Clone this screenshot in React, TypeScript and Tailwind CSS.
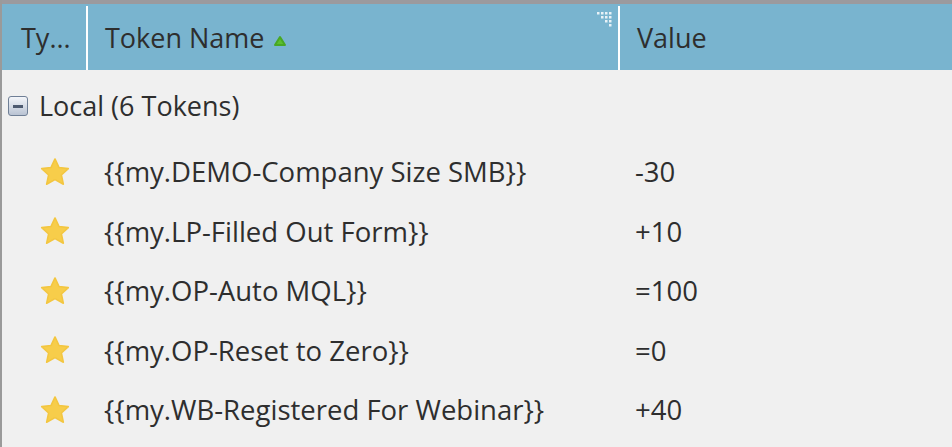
import React from 'react';

const tokens = [
  { name: '{{my.DEMO-Company Size SMB}}', value: '-30' },
  { name: '{{my.LP-Filled Out Form}}', value: '+10' },
  { name: '{{my.OP-Auto MQL}}', value: '=100' },
  { name: '{{my.OP-Reset to Zero}}', value: '=0' },
  { name: '{{my.WB-Registered For Webinar}}', value: '+40' },
];

const Star: React.FC = () => (
  <svg width="32" height="30" viewBox="0 0 24 23" className="shrink-0">
    <path
      d="M12 1.5l3.1 6.6 7.1.8-5.3 4.9 1.5 7.1L12 17.3l-6.4 3.6 1.5-7.1L1.8 8.9l7.1-.8z"
      fill="#f7cd4a"
      stroke="#f3c640"
      strokeWidth="1.2"
      strokeLinejoin="round"
    />
  </svg>
);

const SortUp: React.FC = () => (
  <svg width="14" height="12" viewBox="0 0 14 12" className="ml-[8px] mt-[6px]">
    <path d="M7 2 L12 10 L2 10 Z" fill="#5cbf2f" stroke="#48a824" strokeWidth="2" strokeLinejoin="round" />
  </svg>
);

const Grip: React.FC = () => (
  <svg width="18" height="18" viewBox="0 0 18 18" className="absolute right-[4px] top-[5px]">
    {[
      [1, 1], [5, 1], [9, 1], [13, 1],
      [5, 5], [9, 5], [13, 5],
      [9, 9], [13, 9],
      [13, 13],
    ].map(([x, y]) => (
      <rect key={`${x}-${y}`} x={x} y={y} width="2.5" height="2.5" fill="#e8f2f7" />
    ))}
  </svg>
);

const App: React.FC = () => {
  return (
    <div
      className="w-[952px] h-[447px] overflow-hidden bg-[#f0f0f0] border-l-2 border-[#9a9a9a] text-[#2e2e2e]"
      style={{ fontFamily: '"Open Sans", "Noto Sans", sans-serif' }}
    >
      <div className="h-[4px] bg-[#9b9a9e]" />
      <div className="flex h-[66px] bg-[#79b4cf] text-[27px] pt-[2px]">
        <div className="w-[86px] flex items-center pl-[19px] border-r-2 border-white">Ty...</div>
        <div className="relative w-[532px] flex items-center pl-[17px] border-r-2 border-white">
          <span>Token Name</span>
          <SortUp />
          <Grip />
        </div>
        <div className="flex-1 flex items-center pl-[17px]">Value</div>
      </div>

      <div className="flex items-center h-[72px] pl-[6px] text-[27px]">
        <div className="w-[20px] h-[20px] rounded-[3px] border border-[#6f7f96] bg-gradient-to-b from-[#f4f6fa] to-[#b9c3d3] flex items-center justify-center">
          <div className="w-[10px] h-[3px] bg-[#4d5a70]" />
        </div>
        <span className="ml-[11px]">Local (6 Tokens)</span>
      </div>

      {tokens.map((t) => (
        <div key={t.name} className="flex items-center h-[59.5px] text-[27.5px]">
          <div className="w-[100px] flex items-center pl-[37px]">
            <Star />
          </div>
          <div className="w-[533px] pl-[2px]">{t.name}</div>
          <div>{t.value}</div>
        </div>
      ))}
    </div>
  );
};

export default App;
